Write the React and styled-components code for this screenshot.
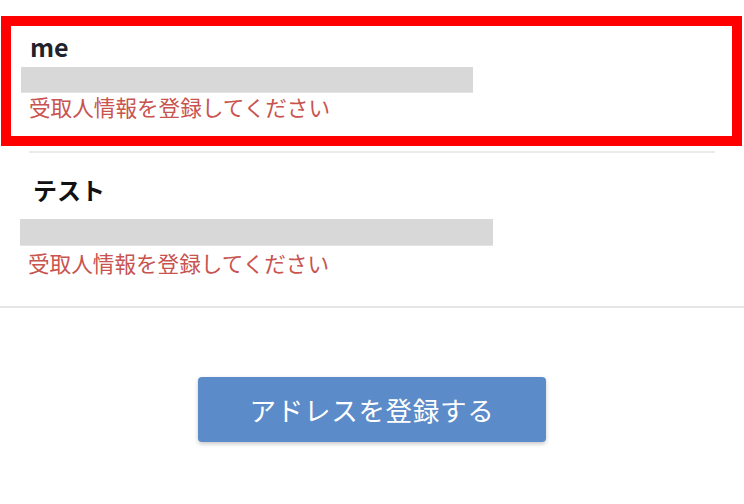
import React from "react";
import styled, { createGlobalStyle, css } from "styled-components";

const GlobalStyle = createGlobalStyle`
  body {
    margin: 0;
    background: #ffffff;
    font-family: "Noto Sans CJK JP", "Noto Sans", sans-serif;
  }
`;

const Page = styled.div`
  width: 744px;
  height: 504px;
  overflow: hidden;
  background: #ffffff;
`;

const AddressList = styled.ul`
  list-style: none;
  margin: 0;
  padding: 0;
  border-bottom: 2px solid #e6e6e6;
`;

// 赤枠はスクリーンショット上の注釈
const AddressItem = styled.li`
  box-sizing: border-box;
  padding: 25px 0 33px 20px;

  ${(p) =>
    p.$highlighted &&
    css`
      margin: 16px 2px 5px 1px;
      padding: 8px 0 18px 10px;
      border: 10px solid #ff0000;
    `}
`;

const Divider = styled.li`
  height: 2px;
  margin: 0 29px;
  background: #ebebeb;
`;

const Name = styled.div`
  padding-left: ${(p) => p.$indent}px;
  margin-bottom: ${(p) => p.$gap}px;
  font-size: ${(p) => p.$size}px;
  line-height: 24px;
  font-weight: 700;
  color: ${(p) => p.$color};
`;

const MaskedAddress = styled.div`
  height: ${(p) => p.$height}px;
  width: ${(p) => p.$width}px;
  background: #d8d8d8;
  border-bottom: 1px solid #e4e4e4;
  box-sizing: border-box;
`;

const Notice = styled.div`
  margin-top: ${(p) => p.$gap}px;
  padding-left: 8px;
  font-size: 21.6px;
  line-height: 21.5px;
  color: #c8534f;
`;

const Actions = styled.div`
  display: flex;
  justify-content: center;
  padding-top: 69px;
`;

const RegisterButton = styled.button`
  width: 348px;
  height: 65px;
  border: none;
  border-radius: 4px;
  background: #5b8bc8;
  color: #ffffff;
  font-family: "Noto Sans CJK JP", "Noto Sans", sans-serif;
  font-size: 26.5px;
  font-weight: 400;
  letter-spacing: 0.7px;
  box-shadow: 0 2px 4px rgba(0, 0, 0, 0.22);
  cursor: pointer;
`;

const addresses = [
  { id: 1, name: "me", color: "#1f232b", size: 25, indent: 9, nameGap: 9, barW: 452, barH: 26, noticeGap: 3, highlighted: true },
  { id: 2, name: "テスト", color: "#111111", size: 24, indent: 13, nameGap: 17, barW: 473, barH: 27, noticeGap: 6, highlighted: false },
];

export default function App() {
  return (
    <Page>
      <GlobalStyle />
      <AddressList>
        {addresses.map((a, i) => (
          <React.Fragment key={a.id}>
            {i > 0 && <Divider />}
            <AddressItem $highlighted={a.highlighted}>
              <Name $indent={a.indent} $gap={a.nameGap} $size={a.size} $color={a.color}>{a.name}</Name>
              <MaskedAddress $width={a.barW} $height={a.barH} />
              <Notice $gap={a.noticeGap}>受取人情報を登録してください</Notice>
            </AddressItem>
          </React.Fragment>
        ))}
      </AddressList>
      <Actions>
        <RegisterButton>アドレスを登録する</RegisterButton>
      </Actions>
    </Page>
  );
}
